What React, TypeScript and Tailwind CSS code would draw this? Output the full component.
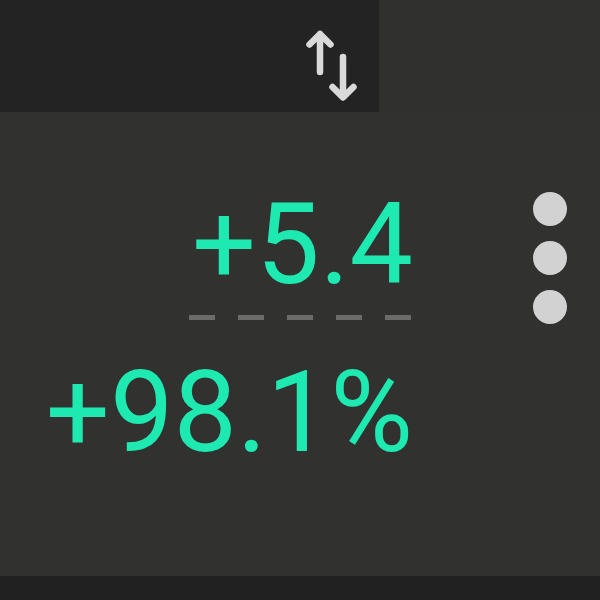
// icons
function SwapIcon() {
    return (
        <svg width="60" height="80" viewBox="0 0 60 80" fill="none" stroke="#d9d9d9" strokeWidth="6.5" strokeLinecap="round" strokeLinejoin="round">
            <path d="M18 47V9M7.5 19.5L18 9l10.5 10.5" />
            <path d="M41 32v40M30.5 62L41 72.5 51.5 62" />
        </svg>
    );
}

export default function App() {
    return (
        <div className="w-[600px] h-[600px] bg-[#31312f] flex flex-col" style={{ fontFamily: 'Roboto, "Noto Sans", sans-serif' }}>
            {/* Top bar */}
            <div className="flex h-[112px]">
                <div className="w-[379px] bg-[#232323] flex justify-end items-start pt-[25px] pr-[17px]">
                    <SwapIcon />
                </div>
                <div className="flex-1 bg-[#30302e]" />
            </div>

            {/* Values */}
            <div className="flex-1 flex">
                <div className="w-[413px] flex flex-col items-end pt-[76px]">
                    <span className="text-[113px] leading-none text-[#1de9b0]">+5.4</span>
                    <div className="flex gap-[23px] mt-[14px] mr-[2px]">
                        <div className="w-[26px] h-[5px] bg-[#6b6b69]" />
                        <div className="w-[26px] h-[5px] bg-[#6b6b69]" />
                        <div className="w-[26px] h-[5px] bg-[#6b6b69]" />
                        <div className="w-[26px] h-[5px] bg-[#6b6b69]" />
                        <div className="w-[26px] h-[5px] bg-[#6b6b69]" />
                    </div>
                    <span className="text-[113px] leading-none text-[#1de9b0] mt-[36px]">+98.1%</span>
                </div>
                <div className="flex flex-col gap-[15px] pt-[80px] ml-[120px]">
                    <div className="w-[34px] h-[34px] rounded-full bg-[#d2d2d2]" />
                    <div className="w-[34px] h-[34px] rounded-full bg-[#d2d2d2]" />
                    <div className="w-[34px] h-[34px] rounded-full bg-[#d2d2d2]" />
                </div>
            </div>

            {/* Bottom bar */}
            <div className="h-[24px] bg-[#212121]" />
        </div>
    );
}
